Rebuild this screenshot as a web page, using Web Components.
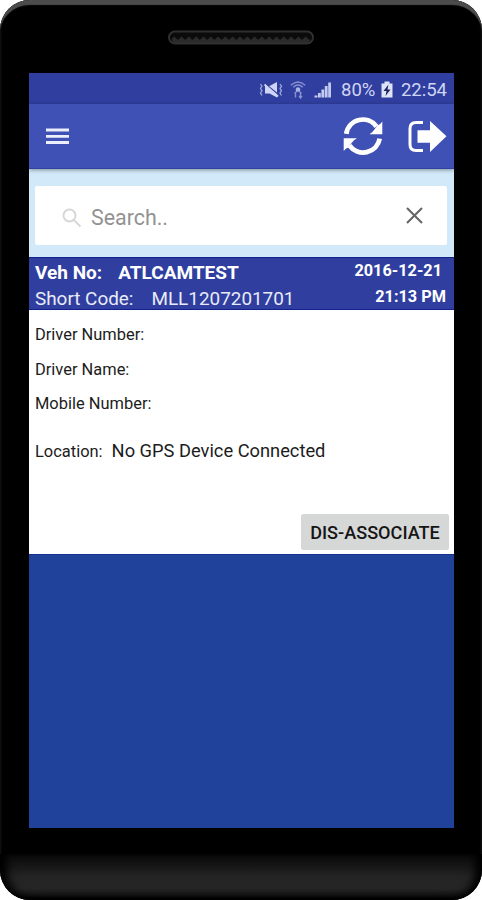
<!DOCTYPE html>
<html lang="en">
<head>
<meta charset="utf-8">
<title>Vehicle Details</title>
<style>
  html, body { margin: 0; padding: 0; background: #fff; }
  body { width: 482px; height: 900px; overflow: hidden; font-family: Roboto, sans-serif; }
</style>
</head>
<body>

<phone-frame>
  <status-bar battery="80%" time="22:54"></status-bar>
  <app-toolbar></app-toolbar>
  <search-box placeholder="Search.."></search-box>
  <vehicle-header>
    <span slot="veh">ATLCAMTEST</span>
    <span slot="date">2016-12-21</span>
    <span slot="code">MLL1207201701</span>
    <span slot="time">21:13 PM</span>
  </vehicle-header>
  <vehicle-details>
    <detail-row label="Driver Number:"></detail-row>
    <detail-row label="Driver Name:"></detail-row>
    <detail-row label="Mobile Number:"></detail-row>
    <detail-row class="location" label="Location:">No GPS Device Connected</detail-row>
    <action-button slot="action">DIS-ASSOCIATE</action-button>
  </vehicle-details>
</phone-frame>

<script>
// small helper, every component just drops its template in an open root
function attach(el, html) {
  el.attachShadow({ mode: 'open' }).innerHTML = html;
}

/* phone body, speaker and screen */
class PhoneFrame extends HTMLElement {
  constructor() {
    super();
    attach(this, `
      <style>
        :host {
          display: flex;
          flex-direction: column;
          box-sizing: border-box;
          width: 482px;
          height: 900px;
          background: #000;
          border-radius: 30px;
          overflow: hidden;
          box-shadow: inset 0 6px 1px -1px #4c4c4c, inset 0 0 2px 1px #141414;
        }
        .top { height: 73px; flex: none; display: flex; justify-content: center; align-items: flex-start; }
        .top svg { display: block; margin-top: 29px; }
        .screen {
          flex: none;
          display: flex;
          flex-direction: column;
          width: 425px;
          height: 755px;
          margin-left: 29px;
          background: #20429b;
        }
        .chin {
          flex: none;
          height: 46px;
          margin-top: 26px;
          border-radius: 0 0 30px 30px;
          background: linear-gradient(#0c0c0c, #151515 25%, #242424 50%, #252525 75%, #161616 88%, #000 98%);
          box-shadow: inset 9px 0 8px -2px #000, inset -9px 0 8px -2px #000;
        }
      </style>
      <div class="top">
        <svg width="148" height="17" viewBox="0 0 148 17">
          <defs>
            <pattern id="mesh" width="7.3" height="8" patternUnits="userSpaceOnUse" y="6">
              <path d="M0 1.5L3.6 5L7.3 1.5V8H0Z" fill="#2b2b2b"/>
            </pattern>
          </defs>
          <rect x="1.5" y="2" width="145" height="13" rx="6.5" fill="#0b0b0b"/>
          <rect x="5" y="6" width="138" height="8" rx="4" fill="url(#mesh)"/>
          <rect x="2" y="2.5" width="144" height="12" rx="6" fill="none" stroke="#303030" stroke-width="2"/>
        </svg>
      </div>
      <div class="screen"><slot></slot></div>
      <div class="chin"></div>
    `);
  }
}

class StatusBar extends HTMLElement {
  constructor() {
    super();
    attach(this, `
      <style>
        :host {
          display: flex;
          align-items: center;
          box-sizing: border-box;
          height: 31px;
          padding: 3px 7px 0 230px;
          background: #303f9f;
          color: #cfd5f5;
          font-size: 18.5px;
          line-height: 28px;
        }
        svg { display: block; flex: none; }
        .battery { width: 35px; margin-left: 9px; }
        .time { margin-left: 8px; }
      </style>
      <svg width="24" height="18" viewBox="0 0 24 18">
        <g fill="none" stroke="#9da7dc" stroke-width="1.3">
          <path d="M1.5 3L3 5.2L1.5 7.5L3 9.8L1.5 12L3 14.5M21 3L22.5 5.2L21 7.5L22.5 9.8L21 12L22.5 14.5"/>
        </g>
        <path d="M6 5h4.5l7.500-4v15.500L10.500 12.500H6z" fill="#cfd5f5"/>
        <path d="M6.500 3L20 14" stroke="#303f9f" stroke-width="1.300"/>
        <path d="M5.500 3.500L19 15.500" stroke="#cfd5f5" stroke-width="1.8"/>
      </svg>
      <svg width="16" height="18" viewBox="0 0 16 18" style="margin-left:7px">
        <g fill="none" stroke="#8792cf" stroke-width="1.4">
          <path d="M.8 4.200Q8-2.400 15.2 4.200M3.2 6.200Q8 2 12.8 6.200"/>
          <path d="M8 9L4.500 12.500M8 9L11.500 12.500M5.500 16.500V12.500M10.500 11.500v5M9 15l1.5 2l1.5-2"/>
        </g>
        <circle cx="8" cy="8.500" r="2.300" fill="#a9b2e2"/>
      </svg>
      <svg width="18" height="18" viewBox="0 0 18 18" style="margin-left:8px">
        <path d="M.5 14.500h3v2H.5zM4 12h2.800v4.500H4zM7.400 8.500h2.800v8H7.400zM10.800 5h2.800v11.500H10.800zM14.200 1.500H17v15h-2.800z" fill="#c3caf0"/>
      </svg>
      <span class="battery"></span>
      <svg width="12" height="18" viewBox="0 0 12 18" style="margin-left:5px">
        <path d="M3.500 .5h5v2H11.500v14H.5v-14h3z" fill="#dfe3f8"/>
        <path d="M7.500 3.500L2.500 10H5.500L4.500 15L9.500 8.500H6.500z" fill="#1d255c"/>
      </svg>
      <span class="time"></span>
    `);
  }
  connectedCallback() {
    this.shadowRoot.querySelector('.battery').textContent = this.getAttribute('battery');
    this.shadowRoot.querySelector('.time').textContent = this.getAttribute('time');
  }
}

class AppToolbar extends HTMLElement {
  constructor() {
    super();
    attach(this, `
      <style>
        :host {
          display: flex;
          align-items: center;
          box-sizing: border-box;
          height: 65px;
          padding: 0 7px 0 17px;
          background: #3f51b5;
          border-bottom: 1px solid #3242a4;
          box-shadow: 0 1px 4px rgba(0, 0, 0, .4);
          z-index: 1;
        }
        svg { display: block; flex: none; }
        .refresh { margin-left: auto; margin-right: 24px; }
      </style>
      <svg width="23" height="17" viewBox="0 0 23 17">
        <path d="M0 2h23M0 8.300h23M0 14.500h23" stroke="#eceefa" stroke-width="2.800"/>
      </svg>
      <svg class="refresh" width="40" height="40" viewBox="0 0 40 40">
        <g fill="none" stroke="#fff" stroke-width="4.800">
          <path d="M3.300 17.800A16.800 16.800 0 0 1 33.500 10.500"/>
          <path d="M36.700 22.700A16.800 16.800 0 0 1 6.500 29.500"/>
        </g>
        <path d="M39.300 5.500V18.200H26.500Q29.500 16.500 31 14L34.500 9.500Q37.500 8.500 39.300 5.500zM.7 35V22.300H14Q10.500 24 9 26.500L5.500 31.500Q2.500 32 .7 35z" fill="#fff"/>
      </svg>
      <svg width="40" height="36" viewBox="0 0 40 36">
        <path d="M16 4.500H9Q3 4.500 3 10.500V26.500Q3 32.500 9 32.500H16" fill="none" stroke="#fff" stroke-width="3"/>
        <path d="M10.500 12.300H23V3L39.500 18.300L23 34V24.700H10.500z" fill="#fff"/>
      </svg>
    `);
  }
}

class SearchBox extends HTMLElement {
  constructor() {
    super();
    attach(this, `
      <style>
        :host { display: block; box-sizing: border-box; height: 88px; padding: 17px 7px 12px 6px; background: #d1e9f8; }
        .field {
          display: flex;
          align-items: center;
          box-sizing: border-box;
          height: 59px;
          padding: 0 24px 0 27px;
          background: #fff;
          border-radius: 2px;
        }
        .hint { margin: 4px 0 0 9px; font-size: 21.400px; color: #929292; }
        .close { margin: 0 0 1px auto; }
        svg { display: block; flex: none; }
      </style>
      <div class="field">
        <svg width="20" height="20" viewBox="0 0 20 20" style="margin-top:4px">
          <g fill="none" stroke="#d6d6d6" stroke-width="1.900">
            <circle cx="7.500" cy="7.500" r="6"/>
            <path d="M11.800 11.800L18.500 18.500"/>
          </g>
        </svg>
        <span class="hint"></span>
        <svg class="close" width="17" height="17" viewBox="0 0 17 17">
          <path d="M1 1L16 16M16 1L1 16" stroke="#666" stroke-width="2.100"/>
        </svg>
      </div>
    `);
  }
  connectedCallback() {
    this.shadowRoot.querySelector('.hint').textContent = this.getAttribute('placeholder');
  }
}

class VehicleHeader extends HTMLElement {
  constructor() {
    super();
    attach(this, `
      <style>
        :host {
          display: flex;
          flex-direction: column;
          box-sizing: border-box;
          height: 53px;
          padding: 1px 8px 0 6px;
          background: #303f9f;
          border-top: 1px solid #14208b;
          border-bottom: 1px solid #14208b;
          color: #fff;
          font-size: 18.900px;
          line-height: 27px;
          white-space: nowrap;
        }
        .row { display: flex; height: 26px; }
        .veh { font-size: 19px; }
        .veh { font-weight: 700; }
        .code { color: #e9ebf8; }
        .veh .label { margin-right: 16px; }
        .code .label { margin-right: 18px; }
        .right { margin-left: auto; font-size: 16.300px; font-weight: 700; line-height: 24px; color: #fff; }
        .date { margin-right: 4px; }
      </style>
      <div class="row veh">
        <span class="label">Veh No:</span><slot name="veh"></slot>
        <span class="right date"><slot name="date"></slot></span>
      </div>
      <div class="row code">
        <span class="label">Short Code:</span><slot name="code"></slot>
        <span class="right"><slot name="time"></slot></span>
      </div>
    `);
  }
}

class VehicleDetails extends HTMLElement {
  constructor() {
    super();
    attach(this, `
      <style>
        :host {
          display: flex;
          flex-direction: column;
          box-sizing: border-box;
          height: 245px;
          padding: 8px 5px 4px 6px;
          background: #fff;
          border-bottom: 1px solid #15308f;
        }
        ::slotted(.location) { margin-top: 12px; }
        .actions { display: flex; justify-content: flex-end; margin-top: auto; }
      </style>
      <slot></slot>
      <div class="actions"><slot name="action"></slot></div>
    `);
  }
}

class DetailRow extends HTMLElement {
  constructor() {
    super();
    attach(this, `
      <style>
        :host { display: flex; align-items: baseline; height: 34.500px; line-height: 34px; font-size: 18.300px; color: #1c1c1c; white-space: nowrap; }
        .label { font-size: 16.450px; margin-right: 9px; }
      </style>
      <span class="label"></span><slot></slot>
    `);
  }
  connectedCallback() {
    this.shadowRoot.querySelector('.label').textContent = this.getAttribute('label');
  }
}

class ActionButton extends HTMLElement {
  constructor() {
    super();
    attach(this, `
      <style>
        :host {
          display: flex;
          align-items: center;
          justify-content: center;
          width: 148px;
          height: 36px;
          background: #d6d7d7;
          border-radius: 2.500px;
          color: #151515;
          font-size: 18.100px;
          font-weight: 500;
          white-space: nowrap;
        }
      </style>
      <slot></slot>
    `);
  }
}

customElements.define('phone-frame', PhoneFrame);
customElements.define('status-bar', StatusBar);
customElements.define('app-toolbar', AppToolbar);
customElements.define('search-box', SearchBox);
customElements.define('vehicle-header', VehicleHeader);
customElements.define('vehicle-details', VehicleDetails);
customElements.define('detail-row', DetailRow);
customElements.define('action-button', ActionButton);
</script>
</body>
</html>
